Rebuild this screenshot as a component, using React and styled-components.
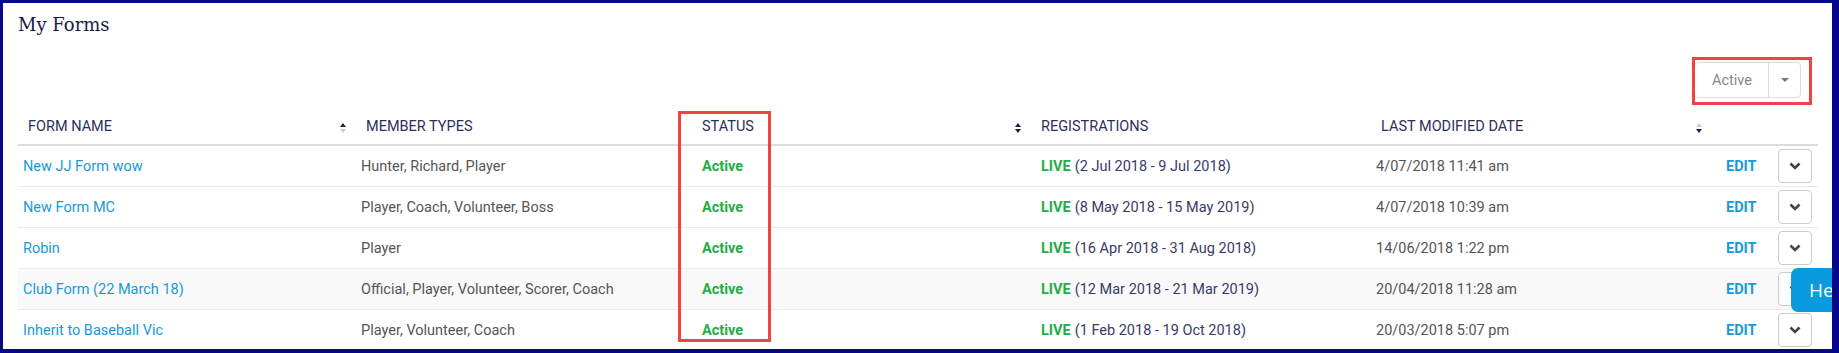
import React from "react";
import styled, { createGlobalStyle, css } from "styled-components";

const GlobalStyle = createGlobalStyle`
	html, body {
		margin: 0;
		padding: 0;
		background: #fff;
	}
	body {
		font-family: Roboto, "Liberation Sans", Arial, sans-serif;
	}
`;

const COLUMNS = "338px 336px 339px 340px 341px 61px 45px";

const forms = [
	{
		name: "New JJ Form wow",
		members: "Hunter, Richard, Player",
		period: "(2 Jul 2018 - 9 Jul 2018)",
		modified: "4/07/2018 11:41 am",
	},
	{
		name: "New Form MC",
		members: "Player, Coach, Volunteer, Boss",
		period: "(8 May 2018 - 15 May 2019)",
		modified: "4/07/2018 10:39 am",
	},
	{
		name: "Robin",
		members: "Player",
		period: "(16 Apr 2018 - 31 Aug 2018)",
		modified: "14/06/2018 1:22 pm",
	},
	{
		name: "Club Form (22 March 18)",
		members: "Official, Player, Volunteer, Scorer, Coach",
		period: "(12 Mar 2018 - 21 Mar 2019)",
		modified: "20/04/2018 11:28 am",
		hover: true,
	},
	{
		name: "Inherit to Baseball Vic",
		members: "Player, Volunteer, Coach",
		period: "(1 Feb 2018 - 19 Oct 2018)",
		modified: "20/03/2018 5:07 pm",
	},
];

const Frame = styled.div`
	position: relative;
	box-sizing: border-box;
	height: 353px;
	overflow: hidden;
	border: 3px solid #07078a;
	border-right-width: 7px;
	border-bottom-width: 4px;
	padding: 0 14px 0 15px;
`;

const Title = styled.h1`
	margin: 10px 0 0 0;
	font-family: "DejaVu Serif", "Liberation Serif", serif;
	font-size: 18px;
	font-weight: 400;
	line-height: 24px;
	color: #1b1b4b;
`;

const Toolbar = styled.div`
	display: flex;
	justify-content: flex-end;
	padding-right: 17px;
	margin-top: 25px;
`;

const SelectWrap = styled.div`
	position: relative;
`;

const Select = styled.div`
	display: flex;
	align-items: stretch;
	box-sizing: border-box;
	width: 107px;
	height: 36px;
	border: 1px solid #ddd;
	border-radius: 4px;
	background: #fff;
`;

const SelectValue = styled.span`
	flex: 1;
	display: flex;
	align-items: center;
	padding-left: 17px;
	font-size: 14.5px;
	color: #888;
`;

const SelectCaret = styled.span`
	width: 31px;
	display: flex;
	align-items: center;
	justify-content: center;
	border-left: 1px solid #ddd;

	&::after {
		content: "";
		border-left: 4px solid transparent;
		border-right: 4px solid transparent;
		border-top: 4px solid #777;
	}
`;

const Highlight = styled.div`
	position: absolute;
	box-sizing: border-box;
	border: 3px solid #f04444;
	pointer-events: none;
`;

const SelectMark = styled(Highlight)`
	left: -2px;
	top: -5px;
	right: -11px;
	bottom: -7px;
`;

const StatusMark = styled(Highlight)`
	left: 660px;
	top: 3px;
	width: 93px;
	height: 231px;
`;

const Table = styled.div`
	position: relative;
	margin-top: 10px;
`;

const HeadRow = styled.div`
	display: grid;
	grid-template-columns: ${COLUMNS};
	height: 36px;
	border-bottom: 2px solid #ddd;
`;

const HeadCell = styled.div`
	display: flex;
	align-items: center;
	padding: 0 10px;
	font-size: 14.5px;
	text-transform: uppercase;
	color: #2e2e5c;
	white-space: nowrap;
`;

const SortIcon = styled.span`
	margin-left: auto;
	display: flex;
	flex-direction: column;
	gap: 2px;
	padding-top: 3px;

	&::before,
	&::after {
		content: "";
		border-left: 3.5px solid transparent;
		border-right: 3.5px solid transparent;
	}
	&::before {
		border-bottom: 4px solid ${(p) => (p.dir === "desc" ? "#c9c9d9" : "#1f1f4f")};
	}
	&::after {
		border-top: 4px solid ${(p) => (p.dir === "asc" ? "#c9c9d9" : "#1f1f4f")};
	}
`;

const BodyRow = styled.div`
	display: grid;
	grid-template-columns: ${COLUMNS};
	height: 40px;
	border-bottom: 1px solid #ebebeb;
	background: ${(p) => (p.hover ? "#f9f9f9" : "#fff")};
`;

const Cell = styled.div`
	display: flex;
	align-items: center;
	padding-left: ${(p) => p.pad || 5}px;
	font-size: 14.5px;
	color: #555;
	white-space: nowrap;
`;

const FormLink = styled.a`
	color: #1799dc;
	text-decoration: none;
	cursor: pointer;
`;

const Strong = styled.span`
	font-weight: 700;
	color: ${(p) => p.color};
	${(p) =>
		p.after &&
		css`
			margin-right: 4px;
		`}
`;

const Period = styled.span`
	color: #3a3a68;
`;

const ActionButton = styled.button`
	box-sizing: border-box;
	width: 34px;
	height: 34px;
	padding: 0;
	display: flex;
	align-items: center;
	justify-content: center;
	background: #fff;
	border: 1px solid #ccc;
	border-radius: 4px;
	cursor: pointer;
`;

const HelpTab = styled.div`
	position: absolute;
	top: 265px;
	right: -31px;
	width: 72px;
	height: 44px;
	display: flex;
	align-items: center;
	padding-left: 18px;
	box-sizing: border-box;
	border-radius: 7px 0 0 7px;
	background: #0a9ae0;
	color: #fff;
	font-family: "Open Sans", Roboto, sans-serif;
	font-size: 19px;
`;

const Chevron = () => (
	<svg width="12" height="8" viewBox="0 0 12 8">
		<polyline points="1.5,1.5 6,6 10.5,1.5" fill="none" stroke="#444" strokeWidth="2.6" />
	</svg>
);

export default function App() {
	return (
		<>
			<GlobalStyle />
			<Frame>
				<Title>My Forms</Title>
				<Toolbar>
					<SelectWrap>
						<Select>
							<SelectValue>Active</SelectValue>
							<SelectCaret />
						</Select>
						<SelectMark />
					</SelectWrap>
				</Toolbar>
				<Table>
					<HeadRow>
						<HeadCell>
							Form Name
							<SortIcon dir="asc" />
						</HeadCell>
						<HeadCell>Member Types</HeadCell>
						<HeadCell>
							Status
							<SortIcon />
						</HeadCell>
						<HeadCell>Registrations</HeadCell>
						<HeadCell>
							Last Modified Date
							<SortIcon dir="desc" />
						</HeadCell>
						<HeadCell />
						<HeadCell />
					</HeadRow>
					{forms.map((f) => (
						<BodyRow key={f.name} hover={f.hover}>
							<Cell>
								<FormLink>{f.name}</FormLink>
							</Cell>
							<Cell>{f.members}</Cell>
							<Cell pad={10}>
								<Strong color="#1fae47">Active</Strong>
							</Cell>
							<Cell pad={10}>
								<Strong color="#1fae47" after>
									LIVE
								</Strong>
								<Period>{f.period}</Period>
							</Cell>
							<Cell>{f.modified}</Cell>
							<Cell pad={14}>
								<Strong color="#1799dc">EDIT</Strong>
							</Cell>
							<Cell>
								<ActionButton>
									<Chevron />
								</ActionButton>
							</Cell>
						</BodyRow>
					))}
					<StatusMark />
				</Table>
				<HelpTab>Help</HelpTab>
			</Frame>
		</>
	);
}
